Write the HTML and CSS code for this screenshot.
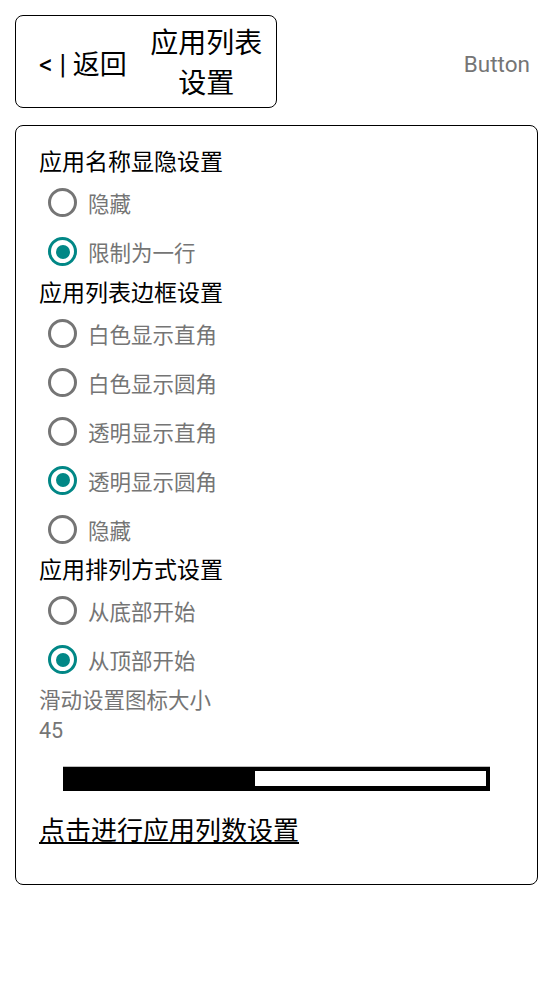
FILE: index.html
```html
<!DOCTYPE html>
<html lang="zh-CN">
<head>
  <meta charset="UTF-8">
  <meta name="viewport" content="width=device-width, initial-scale=1.0">
  <title>应用列表设置</title>
  <link rel="stylesheet" href="styles.css">
</head>
<body>
  <div class="top-bar">
    <div class="nav-box">
      <span class="back">&lt; | 返回</span>
      <span class="page-title">应用列表<br>设置</span>
    </div>
    <span class="plain-btn">Button</span>
  </div>

  <div class="card">
    <div class="group-title">应用名称显隐设置</div>
    <label class="radio"><span class="dot"></span>隐藏</label>
    <label class="radio checked"><span class="dot"></span>限制为一行</label>

    <div class="group-title">应用列表边框设置</div>
    <label class="radio"><span class="dot"></span>白色显示直角</label>
    <label class="radio"><span class="dot"></span>白色显示圆角</label>
    <label class="radio"><span class="dot"></span>透明显示直角</label>
    <label class="radio checked"><span class="dot"></span>透明显示圆角</label>
    <label class="radio"><span class="dot"></span>隐藏</label>

    <div class="group-title">应用排列方式设置</div>
    <label class="radio"><span class="dot"></span>从底部开始</label>
    <label class="radio checked"><span class="dot"></span>从顶部开始</label>

    <div class="hint first">滑动设置图标大小</div>
    <div class="hint">45</div>

    <div class="seekbar">
      <div class="seek-fill" style="width: 45%"></div>
      <div class="seek-rest"></div>
    </div>

    <a class="link" href="#">点击进行应用列数设置</a>
  </div>
</body>
</html>
```

FILE: styles.css
```css
/* General */
body {
  margin: 0;
  font-family: Roboto, "Noto Sans CJK SC", sans-serif;
  color: #000;
  background-color: #fff;
}

/* Top bar */
.top-bar {
  display: flex;
  align-items: center;
  justify-content: space-between;
  padding: 15px 24px 0 15px;
}

.nav-box {
  box-sizing: border-box;
  width: 262px;
  height: 93px;
  border: 1.5px solid #000;
  border-radius: 8px;
  display: flex;
  align-items: center;
}

.back {
  margin-left: 23px;
  margin-top: 2px;
  font-size: 27px;
}

.page-title {
  flex: 1;
  text-align: center;
  font-size: 28px;
  line-height: 40px;
  margin: 4px 8px 0 18px;
}

.plain-btn {
  margin-top: 4px;
  font-size: 22.5px;
  color: #757575;
}

/* Card */
.card {
  box-sizing: border-box;
  margin: 17px 16px 0 15px;
  height: 760px;
  padding: 19.5px 22px 0 23px;
  border: 1.5px solid #000;
  border-radius: 8px;
}

.group-title {
  padding-top: 2.5px;
  font-size: 23px;
  line-height: 30px;
}

.radio {
  display: flex;
  align-items: center;
  height: 49px;
  font-size: 21.5px;
  color: #757575;
}

.radio .dot {
  box-sizing: border-box;
  width: 29px;
  height: 29px;
  margin: 0 11px 0 9px;
  border: 3px solid #757575;
  border-radius: 50%;
  display: flex;
  align-items: center;
  justify-content: center;
}

.radio.checked .dot {
  border-color: #018786;
}

.radio.checked .dot::after {
  content: "";
  width: 14px;
  height: 14px;
  border-radius: 50%;
  background-color: #018786;
}

.hint {
  font-size: 21.5px;
  line-height: 30px;
  color: #757575;
}

.hint.first {
  margin-top: 2px;
}

/* Seekbar */
.seekbar {
  display: flex;
  margin: 20px 25px 0 24px;
  padding: 4px 4px 5px 0;
  height: 15px;
  background-color: #000;
  border-top: 1px solid #bdbdbd;
}

.seek-fill {
  flex-shrink: 0;
  margin-right: 2px;
}

.seek-rest {
  flex: 1;
  background-color: #fff;
}

.link {
  display: inline-block;
  margin-top: 22px;
  font-size: 26px;
  line-height: 36px;
  color: #000;
}
```
